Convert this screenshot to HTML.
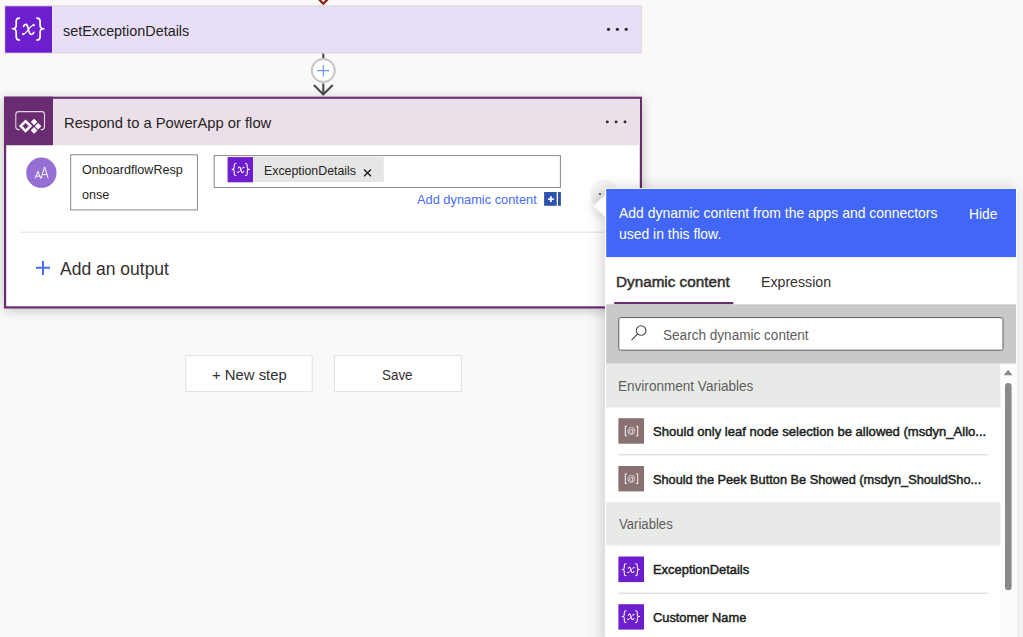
<!DOCTYPE html>
<html><head><meta charset="utf-8"><title>Flow</title>
<style>
html,body{margin:0;padding:0;}
body{width:1023px;height:637px;overflow:hidden;position:relative;background:#faf9f8;font-family:"Liberation Sans",sans-serif;}
.a{position:absolute;box-sizing:border-box;}
.t{position:absolute;white-space:pre;line-height:20px;transform-origin:0 50%;font-family:"Liberation Sans",sans-serif;}
svg{position:absolute;overflow:visible;}
#c2sh{left:5px;top:98px;width:636px;height:209px;box-shadow:0 2px 11px 1px rgba(0,0,0,.23);}
#halo{left:590px;top:179.5px;width:28px;height:28px;border-radius:50%;background:#f6f5f4;}
#beak{left:596px;top:197.7px;width:16.2px;height:16.2px;background:#fff;transform:rotate(45deg);box-shadow:0 0 12px rgba(0,0,0,.22);}
#pn{left:605px;top:188px;width:412px;height:460px;background:#fff;box-shadow:-3px 0 14px rgba(0,0,0,.17);}
#beak2{left:598px;top:197.7px;width:16.2px;height:16.2px;background:#fff;transform:rotate(45deg);}

</style></head>
<body>
<svg width="0" height="0" style="left:0;top:0">
  <defs>
    <!-- {x} variable glyph designed on a 47x47 tile -->
    <g id="vx" fill="none" stroke="#fff" stroke-linecap="round" stroke-linejoin="round">
      <path stroke-width="1.7" d="M14.5 12.4 C12.2 12.4 11.3 13.5 11.3 15.7 L11.3 19.7 C11.3 21.9 10.1 23 7.5 23.05 C10.1 23.1 11.3 24.3 11.3 26.5 L11.3 31 C11.3 33.2 12.2 34.3 14.5 34.3"/>
      <path stroke-width="1.7" d="M32 12.4 C34.3 12.4 35.2 13.5 35.2 15.7 L35.2 19.7 C35.2 21.9 36.4 23 39 23.05 C36.4 23.1 35.2 24.3 35.2 26.5 L35.2 31 C35.2 33.2 34.3 34.3 32 34.3"/>
      <path stroke-width="1.7" d="M18.7 20.7 C19.5 18.7 21.4 18 22.3 19.7 C23.1 21.2 23.6 25 24.6 27.3 C25.5 29.4 27.7 29.3 28.9 26.7"/>
      <path stroke-width="1.1" d="M28.7 19.4 C26.6 19.6 25 21.9 23.5 23.9 C21.9 26 20.2 28.4 18.1 28.5"/>
      <circle cx="28.7" cy="19.5" r="0.9" fill="#fff" stroke-width="0.5"/>
      <circle cx="18.2" cy="28.4" r="0.9" fill="#fff" stroke-width="0.5"/>
    </g>
    <g id="vxs" fill="none" stroke="#fff" stroke-linecap="round" stroke-linejoin="round">
      <path stroke-width="1.9" d="M14.5 12.4 C12.2 12.4 11.3 13.5 11.3 15.7 L11.3 19.7 C11.3 21.9 10.1 23 7.5 23.05 C10.1 23.1 11.3 24.3 11.3 26.5 L11.3 31 C11.3 33.2 12.2 34.3 14.5 34.3"/>
      <path stroke-width="1.9" d="M32 12.4 C34.3 12.4 35.2 13.5 35.2 15.7 L35.2 19.7 C35.2 21.9 36.4 23 39 23.05 C36.4 23.1 35.2 24.3 35.2 26.5 L35.2 31 C35.2 33.2 34.3 34.3 32 34.3"/>
      <path stroke-width="1.9" d="M18.7 20.7 C19.5 18.7 21.4 18 22.3 19.7 C23.1 21.2 23.6 25 24.6 27.3 C25.5 29.4 27.7 29.3 28.9 26.7"/>
      <path stroke-width="1.35" d="M28.7 19.4 C26.6 19.6 25 21.9 23.5 23.9 C21.9 26 20.2 28.4 18.1 28.5"/>
      <circle cx="28.7" cy="19.5" r="1.1" fill="#fff" stroke-width="0.5"/>
      <circle cx="18.2" cy="28.4" r="1.1" fill="#fff" stroke-width="0.5"/>
    </g>
  </defs>
</svg>

<!-- ============ canvas ============ -->
<div class="a" id="c2sh"></div>
<svg style="left:0;top:0" width="1023" height="637" viewBox="0 0 1023 637" fill="none">
  <!-- card 1 -->
  <rect x="4.5" y="5.5" width="637.2" height="47.9" fill="#d3d1cf"/>
  <rect x="5.2" y="6.3" width="635.8" height="46.4" fill="#e8def7"/>
  <rect x="5.2" y="6.3" width="46.8" height="46.4" fill="#6d1ecf"/>
  <!-- card 2 -->
  <rect x="4" y="96.7" width="638" height="211.8" fill="#692c71"/>
  <rect x="6.2" y="98.9" width="633.6" height="207.4" fill="#fff"/>
  <rect x="6.2" y="98.9" width="633.6" height="46.4" fill="#ebdfea"/>
  <rect x="4" y="96.7" width="49" height="48.5" fill="#692c71"/>
  <!-- avatar -->
  <circle cx="41.35" cy="172.7" r="15.15" fill="#966fd4"/>
  <!-- inputs -->
  <rect x="70.7" y="154.8" width="126.7" height="55.1" fill="#fff" stroke="#8a8886"/>
  <rect x="214.2" y="155.6" width="346.2" height="31.9" fill="#fff" stroke="#8a8886"/>
  <rect x="227.6" y="157.1" width="156.2" height="24.9" fill="#e6e6e6"/>
  <rect x="227.6" y="157.1" width="25.4" height="25.2" fill="#6d1ecf"/>
  <!-- separator -->
  <rect x="20.2" y="231.7" width="606" height="0.9" fill="#dfdddb"/>
  <!-- buttons -->
  <rect x="185.7" y="355.7" width="126.5" height="35.9" fill="#fff" stroke="#e1dfdd"/>
  <rect x="334.4" y="355.7" width="126.9" height="35.9" fill="#fff" stroke="#e1dfdd"/>
</svg>
<svg style="left:5.2px;top:6.3px" width="46.8" height="46.4" viewBox="0.1 0.3 46.8 46.4"><use href="#vx"/></svg>
<svg style="left:227.6px;top:157.1px" width="25.4" height="25.2" viewBox="0 0 25.4 25.2"><g transform="translate(12.70 12.55) scale(.545) translate(-23.25 -23.35)"><use href="#vxs"/></g></svg>

<!-- canvas vector layer -->
<svg style="left:0;top:0" width="1023" height="637" viewBox="0 0 1023 637" fill="none">
  <!-- ellipsis dots -->
  <g fill="#2b2a29"><circle cx="608.5" cy="29.3" r="1.6"/><circle cx="617.4" cy="29.3" r="1.6"/><circle cx="626.2" cy="29.3" r="1.6"/>
  <circle cx="607.3" cy="121.9" r="1.45"/><circle cx="616.1" cy="121.9" r="1.45"/><circle cx="625" cy="121.9" r="1.45"/></g>
  <!-- red chevron from the step above -->
  <polyline points="318.4,-1.2 323.3,3.7 328.2,-1.2" stroke="#8f1d0d" stroke-width="2.2"/>
  <!-- connector -->
  <line x1="323.3" y1="53.6" x2="323.3" y2="58.3" stroke="#4d4b49" stroke-width="2.15"/>
  <circle cx="323.3" cy="70.5" r="11.5" fill="#fff" stroke="#c8c6c4" stroke-width="1.9"/>
  <path d="M317.3 70.6H329.1M323.3 64.9V76.4" stroke="#6893f1" stroke-width="1.1"/>
  <path d="M323.3 83.6V94.6M313.9 85.1L323.3 94.5L332.7 85.1" stroke="#4d4b49" stroke-width="2.15"/>
  <!-- powerapps icon -->
  <path d="M19.6 129.6H18.6C16.9 129.6 15.8 128.5 15.8 126.8V114.4C15.8 112.7 16.9 111.6 18.6 111.6H41.7C43.4 111.6 44.5 112.7 44.5 114.4V126.8C44.5 128.5 43.4 129.6 41.7 129.6H40.7" stroke="#e3d3e6" stroke-width="1.1"/>
  <path fill="#fff" fill-rule="evenodd" d="M25.6 119.4L32.3 126.1L25.6 132.8L18.9 126.1ZM25.6 123L28.7 126.1L25.6 129.2L22.5 126.1Z"/>
  <path fill="#fff" d="M34.1 118.7L37.4 122L34.1 125.3L30.8 122ZM38.1 122.9L41.4 126.2L38.1 129.5L34.8 126.2ZM34.1 127.1L37.4 130.4L34.1 133.7L30.8 130.4Z"/>
  <!-- avatar AA -->
  <path d="M35.1 178.4L37.9 171.3L40.7 178.4M36 176.1H39.8M41 178.4L44.6 166.9L48.2 178.4M42.2 174.6H47" stroke="#fff" stroke-width="1"/>
  <!-- token x -->
  <path d="M364 169.4L371 176.3M371 169.4L364 176.3" stroke="#201f1e" stroke-width="1.4"/>
  <!-- add dynamic content icon -->
  <rect x="544.1" y="192" width="12.6" height="13.8" fill="#2f53aa"/>
  <rect x="558" y="192" width="2.9" height="13.8" fill="#2f53aa"/>
  <path d="M548 199.1H553.8M550.9 196.2V202" stroke="#eef2fb" stroke-width="1.9"/>
  <!-- add an output plus -->
  <path d="M36 267.8H50M43 261V275" stroke="#4b6cf6" stroke-width="2"/>
</svg>

<!-- ============ dynamic content panel ============ -->
<div class="a" id="halo"></div>
<div class="a" style="left:599.2px;top:193.4px;width:1.8px;height:1.8px;border-radius:50%;background:#55534f"></div>
<div class="a" id="beak"></div>
<div class="a" id="pn"></div>
<div class="a" id="beak2"></div>
<svg style="left:0;top:0" width="1023" height="637" viewBox="0 0 1023 637" fill="none">
  <rect x="606.2" y="188.9" width="409.8" height="68.2" fill="#4267f7"/>
  <rect x="614.2" y="302" width="119.1" height="2.3" fill="#692c71"/>
  <rect x="606.2" y="304.3" width="409.8" height="59.4" fill="#c8cac8"/>
  <rect x="618.8" y="317.6" width="384.2" height="32.6" rx="1.8" fill="#fff" stroke="#605e5c"/>
  <rect x="1000.3" y="363.7" width="15.7" height="280" fill="#fcfcfc"/>
  <rect x="606.2" y="363.7" width="394.1" height="43.8" fill="#e8eae7"/>
  <rect x="606.2" y="502.2" width="394.1" height="43.5" fill="#e8eae7"/>
  <rect x="618.4" y="418.2" width="25.6" height="25.5" fill="#887170"/>
  <rect x="618.4" y="466" width="25.6" height="25.4" fill="#887170"/>
  <rect x="618.4" y="556.5" width="25.6" height="25.6" fill="#6d1ecf"/>
  <rect x="618.4" y="604.2" width="25.6" height="25.4" fill="#6d1ecf"/>
  <rect x="618.4" y="454.3" width="369.4" height="1" fill="#d1d1d1"/>
  <rect x="618.4" y="592.7" width="369.4" height="1" fill="#d1d1d1"/>
  <rect x="1005" y="383" width="6.6" height="207.3" rx="3.3" fill="#8a8a8a"/>
  <!-- magnifier -->
  <circle cx="641.1" cy="330.5" r="4.8" stroke="#484644" stroke-width="1.1"/>
  <path d="M637.6 333.9L631.5 340.2" stroke="#484644" stroke-width="1.1"/>
  <!-- [ ] brackets of env-variable icons -->
  <path d="M627 426.2H625.3V435.7H627M636 426.2H637.7V435.7H636" stroke="#f1ecec" stroke-width="1.05"/>
  <path d="M627 474H625.3V483.5H627M636 474H637.7V483.5H636" stroke="#f1ecec" stroke-width="1.05"/>
  <!-- scroll arrow -->
  <path d="M1003.7 375.2L1008.1 369.8L1012.5 375.2Z" fill="#8a8a8a"/>
</svg>
<svg style="left:618.4px;top:556.5px" width="25.6" height="25.6" viewBox="0 0 25.6 25.6"><g transform="translate(12.80 12.75) scale(.545) translate(-23.25 -23.35)"><use href="#vxs"/></g></svg>
<svg style="left:618.4px;top:604.2px" width="25.6" height="25.4" viewBox="0 0 25.6 25.4"><g transform="translate(12.80 12.65) scale(.545) translate(-23.25 -23.35)"><use href="#vxs"/></g></svg>

<!-- text runs -->
<span class="t" style="left:62.50px;top:21.00px;font-size:15.2px;font-weight:400;color:#252423;transform:scaleX(0.9463);">setExceptionDetails</span>
<span class="t" style="left:63.62px;top:113.00px;font-size:15.0px;font-weight:400;color:#252423;transform:scaleX(0.9823);">Respond to a PowerApp or flow</span>
<span class="t" style="left:81.90px;top:160.00px;font-size:13.0px;font-weight:400;color:#252423;transform:scaleX(0.9689);">OnboardflowResp</span>
<span class="t" style="left:81.90px;top:185.00px;font-size:13.0px;font-weight:400;color:#252423;transform:scaleX(0.9689);">onse</span>
<span class="t" style="left:263.65px;top:161.00px;font-size:13.0px;font-weight:400;color:#252423;transform:scaleX(0.9499);">ExceptionDetails</span>
<span class="t" style="left:417.20px;top:190.00px;font-size:13.4px;font-weight:400;color:#4a6cf6;transform:scaleX(0.9574);">Add dynamic content</span>
<span class="t" style="left:60.40px;top:259.00px;font-size:17.5px;font-weight:400;color:#323130;transform:scaleX(0.9998);">Add an output</span>
<span class="t" style="left:212.20px;top:365.00px;font-size:14.9px;font-weight:400;color:#323130;transform:scaleX(0.9984);">+ New step</span>
<span class="t" style="left:382.10px;top:365.00px;font-size:14.9px;font-weight:400;color:#323130;transform:scaleX(0.9002);">Save</span>
<span class="t" style="left:619.00px;top:203.00px;font-size:14.1px;font-weight:400;color:#ffffff;transform:scaleX(0.9890);">Add dynamic content from the apps and connectors</span>
<span class="t" style="left:619.00px;top:224.00px;font-size:14.1px;font-weight:400;color:#ffffff;transform:scaleX(0.9890);">used in this flow.</span>
<span class="t" style="left:968.63px;top:204.00px;font-size:14.2px;font-weight:400;color:#ffffff;transform:scaleX(0.9721);">Hide</span>
<span class="t" style="left:616.41px;top:272.00px;font-size:15.4px;font-weight:400;color:#323130;transform:scaleX(0.9917);-webkit-text-stroke:0.5px #323130;">Dynamic content</span>
<span class="t" style="left:760.78px;top:272.00px;font-size:15.4px;font-weight:400;color:#323130;transform:scaleX(0.9199);">Expression</span>
<span class="t" style="left:662.50px;top:325.00px;font-size:14.0px;font-weight:400;color:#605e5c;transform:scaleX(0.9694);">Search dynamic content</span>
<span class="t" style="left:618.43px;top:376.00px;font-size:14.0px;font-weight:400;color:#605e5c;transform:scaleX(0.9682);">Environment Variables</span>
<span class="t" style="left:652.80px;top:422.00px;font-size:12.9px;font-weight:400;color:#201f1e;transform:scaleX(1.0130);-webkit-text-stroke:0.48px #201f1e;">Should only leaf node selection be allowed (msdyn_Allo...</span>
<span class="t" style="left:652.80px;top:470.00px;font-size:12.9px;font-weight:400;color:#201f1e;transform:scaleX(0.9891);-webkit-text-stroke:0.48px #201f1e;">Should the Peek Button Be Showed (msdyn_ShouldSho...</span>
<span class="t" style="left:619.00px;top:514.00px;font-size:14.0px;font-weight:400;color:#605e5c;transform:scaleX(0.9367);">Variables</span>
<span class="t" style="left:652.60px;top:560.00px;font-size:12.9px;font-weight:400;color:#201f1e;transform:scaleX(1.0014);-webkit-text-stroke:0.48px #201f1e;">ExceptionDetails</span>
<span class="t" style="left:653.10px;top:608.00px;font-size:12.9px;font-weight:400;color:#201f1e;transform:scaleX(0.9939);-webkit-text-stroke:0.48px #201f1e;">Customer Name</span>
<span class="t" style="left:626.90px;top:421.00px;font-size:8.9px;font-weight:400;color:#f1ecec;transform:scaleX(0.9444);">@</span>
<span class="t" style="left:626.90px;top:469.00px;font-size:8.9px;font-weight:400;color:#f1ecec;transform:scaleX(0.9444);">@</span>
</body></html>
